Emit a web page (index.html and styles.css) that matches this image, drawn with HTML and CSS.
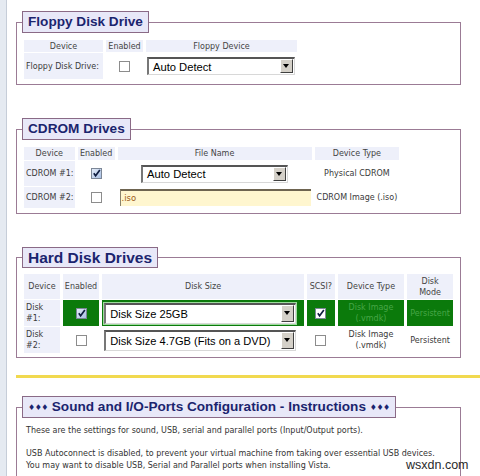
FILE: index.html
```html
<!DOCTYPE html>
<html>
<head>
<meta charset="utf-8">
<link rel="stylesheet" href="styles.css">
</head>
<body>
<div class="page">
  <div class="strip"></div>
  <main class="main">
    <fieldset class="box box-floppy">
      <legend class="lg">Floppy Disk Drive</legend>
      <table class="grid floppy">
        <tr class="hrow">
          <th class="c1">Device</th><th class="c2">Enabled</th><th class="c3">Floppy Device</th>
        </tr>
        <tr class="r1">
          <td class="dev">Floppy Disk Drive:</td>
          <td class="mid"><span class="cb"></span></td>
          <td class="mid sc"><div class="sel sel-floppy"><span class="sel-text">Auto Detect</span><span class="sel-btn"></span></div></td>
        </tr>
      </table>
    </fieldset>

    <fieldset class="box box-cdrom">
      <legend class="lg">CDROM Drives</legend>
      <table class="grid cdrom">
        <tr class="hrow">
          <th class="c1">Device</th><th class="c2">Enabled</th><th class="c3">File Name</th><th class="c4">Device Type</th>
        </tr>
        <tr class="r1">
          <td class="dev">CDROM #1:</td>
          <td class="mid"><span class="cb on"><svg viewBox="0 0 11 11" class="tick"><path d="M2.2 5.2 L4.4 8.3 L9.6 1.2" /></svg></span></td>
          <td class="mid sc"><div class="sel sel-cd"><span class="sel-text">Auto Detect</span><span class="sel-btn"></span></div></td>
          <td class="mid nw">Physical CDROM</td>
        </tr>
        <tr class="r2">
          <td class="dev">CDROM #2:</td>
          <td class="mid"><span class="cb"></span></td>
          <td class="mid sc"><div class="iso">.iso</div></td>
          <td class="mid nw">CDROM Image (.iso)</td>
        </tr>
      </table>
    </fieldset>

    <fieldset class="box box-hdd">
      <legend class="lg lg-big">Hard Disk Drives</legend>
      <table class="grid hdd">
        <tr class="hrow">
          <th class="c1">Device</th><th class="c2">Enabled</th><th class="c3">Disk Size</th><th class="c4">SCSI?</th><th class="c5">Device Type</th><th class="c6">Disk<br>Mode</th>
        </tr>
        <tr class="r1 green">
          <td class="dev">Disk<br>#1:</td>
          <td class="mid g"><span class="cb on"><svg viewBox="0 0 11 11" class="tick"><path d="M2.2 5.2 L4.4 8.3 L9.6 1.2" /></svg></span></td>
          <td class="mid g sc"><div class="sel sel-hdd sel-lit"><span class="sel-text">Disk Size 25GB</span><span class="sel-btn"></span></div></td>
          <td class="mid g"><span class="cb on white"><svg viewBox="0 0 11 11" class="tick"><path d="M2.2 5.2 L4.4 8.3 L9.6 1.2" /></svg></span></td>
          <td class="mid g gt">Disk Image<br>(.vmdk)</td>
          <td class="mid g gt">Persistent</td>
        </tr>
        <tr class="r2">
          <td class="dev">Disk<br>#2:</td>
          <td class="mid"><span class="cb"></span></td>
          <td class="mid sc"><div class="sel sel-hdd"><span class="sel-text">Disk Size 4.7GB (Fits on a DVD)</span><span class="sel-btn"></span></div></td>
          <td class="mid"><span class="cb"></span></td>
          <td class="mid">Disk Image<br>(.vmdk)</td>
          <td class="mid">Persistent</td>
        </tr>
      </table>
    </fieldset>

    <div class="divider"></div>

    <fieldset class="box box-sound">
      <legend class="lg"><span class="dia">&#9830;&#9830;&#9830;</span> Sound and I/O-Ports Configuration - Instructions <span class="dia">&#9830;&#9830;&#9830;</span></legend>
      <p class="txt">These are the settings for sound, USB, serial and parallel ports (Input/Output ports).</p>
      <p class="txt">USB Autoconnect is disabled, to prevent your virtual machine from taking over essential USB devices.<br>You may want to disable USB, Serial and Parallel ports when installing Vista.</p>
    </fieldset>
  </main>
</div>
<div class="watermark">wsxdn.com</div>
</body>
</html>
```

FILE: styles.css
```css
* { box-sizing: border-box; }

body {
  margin: 0;
  background: #ffffff;
  font-family: "DejaVu Sans", Verdana, sans-serif;
  color: #333333;
}

.page {
  display: flex;
  height: 476px;
  overflow: hidden;
}

.strip {
  flex: 0 0 7px;
  background: #e5eaf1;
  border-right: 1px solid #c6cdd8;
}

.main {
  flex: 1;
  padding-left: 9px;
  padding-top: 11px;
}

.box {
  width: 445px;
  margin: 0 0 33px 0;
  border: 1px solid #9b7b95;
  padding: 6px 4px 4px 4px;
  min-width: 0;
}

.box-hdd {
  padding-top: 5px;
  padding-bottom: 3px;
  margin-bottom: 17px;
}

.box-sound {
  padding-top: 7px;
  height: 200px;
  margin-bottom: 0;
}

.lg {
  margin-left: 1px;
  padding: 0 5px;
  height: 22px;
  line-height: 20px;
  background: #e8e8f8;
  border: 1px solid #8a6a86;
  font-family: "Liberation Sans", Arial, sans-serif;
  font-weight: bold;
  font-size: 13.6px;
  color: #1b246e;
  white-space: nowrap;
}

.lg-big {
  font-size: 15.5px;
  height: 21px;
  line-height: 19px;
}

.dia {
  font-family: "DejaVu Sans", sans-serif;
  font-size: 8px;
  letter-spacing: -0.5px;
  vertical-align: 1px;
}

.grid {
  border-collapse: separate;
  border-spacing: 3px 1px;
  font-size: 8px;
  color: #3a3a3a;
}

.grid th, .grid td {
  padding: 0 2px;
  vertical-align: middle;
}

.grid td.sc { padding: 0; }

.grid th {
  background: #eef0fa;
  font-weight: normal;
  text-align: center;
  color: #444;
  white-space: nowrap;
}

.grid td.dev {
  background: #eef0fa;
  text-align: left;
  line-height: 11px;
  white-space: nowrap;
  padding: 0 1px 0 2px;
}

.mid {
  text-align: center;
  line-height: 11px;
}

.nw { white-space: nowrap; padding: 0; }

/* floppy */
.floppy .c1 { width: 79px; }
.floppy .c2 { width: 37px; }
.floppy .c3 { width: 151px; }
.floppy .hrow th { height: 12px; }
.floppy .r1 td { height: 26px; }

/* cdrom */
.cdrom .c1 { width: 49px; }
.cdrom .c2 { width: 37px; }
.cdrom .c3 { width: 194px; }
.cdrom .c4 { width: 84px; padding: 0; }
.cdrom .hrow th { height: 13px; }
.cdrom .r1 td { height: 25px; }
.cdrom .r2 td { height: 21px; }

/* hdd */
.hdd .c1 { width: 36px; }
.hdd .c2 { width: 36px; }
.hdd .c3 { width: 202px; }
.hdd .c4 { width: 28px; padding: 0; }
.hdd .c5 { width: 67px; padding: 0; }
.hdd .c6 { width: 46px; padding: 0; }
.hdd .hrow th { height: 25px; line-height: 11px; }
.hdd .r1 td, .hdd .r2 td { height: 26px; }
.hdd td { padding: 0; }

.g { background: #0b7a0b; }
.gt { color: #47a647; }

/* checkbox */
.cb {
  display: inline-block;
  width: 11px;
  height: 11px;
  border: 1px solid #8c8c8c;
  background: #ffffff;
  vertical-align: middle;
}

.cb.on {
  background: linear-gradient(135deg, #e4ecf8, #a9bfe3);
  border-color: #7c8797;
}

.cb.white {
  background: #ffffff;
}

.tick {
  display: block;
  width: 9px;
  height: 9px;
}

.tick path {
  fill: none;
  stroke: #0e1c40;
  stroke-width: 2;
}

/* select imitation */
.sel {
  display: flex;
  align-items: stretch;
  margin: 0 auto;
  background: #ffffff;
  border-style: solid;
  border-width: 2px 1px 1px 2px;
  border-color: #555555 #d8d8d8 #d8d8d8 #777777;
  font-family: "Liberation Sans", Arial, sans-serif;
  font-size: 11.2px;
  color: #000;
  text-align: left;
}

.sel-text {
  flex: 1;
  padding-left: 4px;
  line-height: 14px;
  white-space: nowrap;
  overflow: hidden;
  align-self: center;
}

.sel-btn {
  flex: 0 0 13px;
  margin: 0 1px 1px 0;
  background: #d4d0c8;
  border: 1px solid;
  border-color: #ffffff #404040 #404040 #ffffff;
  position: relative;
}

.sel-btn::after {
  content: "";
  position: absolute;
  left: 2px;
  top: 50%;
  margin-top: -2px;
  border-style: solid;
  border-width: 4px 3.5px 0 3.5px;
  border-color: #000 transparent transparent transparent;
}

.sel-floppy { width: 148px; height: 18px; margin-left: 1px; }
.sel-cd { width: 147px; height: 18px; }
.sel-hdd { width: 192px; height: 21px; margin-left: 2px; font-size: 11.1px; }
.sel-lit { box-shadow: 0 0 0 1px #9edc9e; }

.iso {
  width: 191px;
  height: 17px;
  margin-left: 2px;
  background: #fff6cf;
  border-style: solid;
  border-width: 2px 0 0 1px;
  border-color: #6e6450 transparent transparent #8a826c;
  color: #9a5a18;
  font-size: 8.4px;
  line-height: 14px;
  text-align: left;
  padding-left: 1px;
}

.divider {
  height: 3px;
  background: #f1d94f;
  margin-bottom: 18px;
}

.txt {
  margin: 0 0 11.5px 5px;
  font-size: 8px;
  line-height: 11.5px;
  color: #333;
  white-space: nowrap;
}

.watermark {
  position: absolute;
  left: 406px;
  top: 458px;
  font-family: "Liberation Sans", Arial, sans-serif;
  font-size: 12.5px;
  color: #2a2a2a;
}
```
